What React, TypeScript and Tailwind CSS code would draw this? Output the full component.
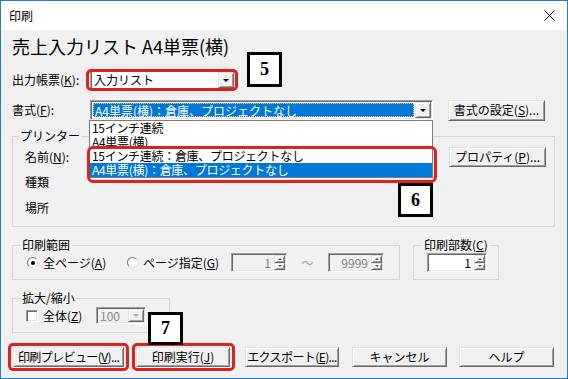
import React from "react";

const raised =
  "border border-t-[#e3e3e3] border-l-[#e3e3e3] border-r-[#696969] border-b-[#696969] shadow-[inset_1px_1px_0_#ffffff,inset_-1px_-1px_0_#a0a0a0]";
const sunken =
  "border border-t-[#a0a0a0] border-l-[#a0a0a0] border-r-white border-b-white shadow-[inset_1px_1px_0_#696969,inset_-1px_-1px_0_#e3e3e3]";

function DownArrow({ disabled }: { disabled?: boolean }) {
  return (
    <div className={"w-[16px] h-full flex items-center justify-center bg-[#f0f0f0] " + raised}>
      <div
        className={
          "w-0 h-0 border-l-[3px] border-r-[3px] border-t-[3px] border-l-transparent border-r-transparent " +
          (disabled ? "border-t-[#a0a0a0]" : "border-t-black")
        }
      />
    </div>
  );
}

function SpinButtons() {
  return (
    <div className="w-[11px] h-full flex flex-col">
      <div className={"flex-1 flex items-center justify-center bg-[#f0f0f0] " + raised}>
        <div className="w-0 h-0 border-l-[2px] border-r-[2px] border-b-[2px] border-l-transparent border-r-transparent border-b-[#606060]" />
      </div>
      <div className={"flex-1 flex items-center justify-center bg-[#f0f0f0] " + raised}>
        <div className="w-0 h-0 border-l-[2px] border-r-[2px] border-t-[2px] border-l-transparent border-r-transparent border-t-[#606060]" />
      </div>
    </div>
  );
}

function Spinner({ value, width, disabled }: { value: string; width: string; disabled?: boolean }) {
  return (
    <div className={"h-[19px] flex p-[1px] " + width + " " + sunken + (disabled ? " bg-[#f0f0f0]" : " bg-white")}>
      <div className={"flex-1 text-right pr-[3px] leading-[16px] " + (disabled ? "text-[#808080]" : "text-black")}>
        {value}
      </div>
      <SpinButtons />
    </div>
  );
}

function Button({ children, className }: { children: React.ReactNode; className: string }) {
  return (
    <div
      className={
        "h-[20px] flex items-center justify-center bg-[#f0f0f0] leading-[14px] whitespace-nowrap " +
        raised +
        " " +
        className
      }
    >
      {children}
    </div>
  );
}

function Group({
  label,
  className,
  legendClass,
  children,
}: {
  label: React.ReactNode;
  className: string;
  legendClass: string;
  children: React.ReactNode;
}) {
  return (
    <fieldset className={"border border-[#d5d5d5] " + className}>
      <legend className={"px-[1px] leading-[14px] " + legendClass}>{label}</legend>
      {children}
    </fieldset>
  );
}

export default function App() {
  return (
    <div className="w-[568px] h-[379px] relative overflow-hidden border border-[#1c7fd0] bg-[#f0f0f0] flex flex-col text-[12px] text-black whitespace-nowrap font-['Noto_Sans_CJK_JP',sans-serif]">
      <div className="h-[29px] bg-white flex items-center justify-between pl-[8px] pr-[12px]">
        <span className="leading-[14px]">印刷</span>
        <svg width="11" height="11" viewBox="0 0 11 11">
          <path d="M0.5 0.5 L10.5 10.5 M10.5 0.5 L0.5 10.5" stroke="#111" strokeWidth="1" />
        </svg>
      </div>

      <div className="flex flex-col pl-[11px]">
        <h1 className="mt-[6px] text-[18px] leading-[20px] font-normal">売上入力リスト A4単票(横)</h1>

        <div className="mt-[14px] h-[20px] flex items-center">
          <span className="w-[78px] leading-[14px]">
            出力帳票(<u>K</u>):
          </span>
          <div className={"w-[146px] h-[20px] flex p-[1px] bg-white " + sunken}>
            <div className="flex-1 pl-[2px] leading-[16px]">入力リスト</div>
            <DownArrow />
          </div>
        </div>

        <div className="mt-[10px] h-[20px] flex items-center">
          <span className="w-[78px] leading-[14px]">
            書式(<u>F</u>):
          </span>
          <div className="relative">
            <div className={"w-[343px] h-[20px] flex p-[1px] bg-white " + sunken}>
              <div className="flex-1 flex p-[1px]">
                <div className="flex-1 bg-[#0078d7] text-white pl-[1px] leading-[14px] border border-dotted border-[#e9c98a]">
                  A4単票(横)：倉庫、プロジェクトなし
                </div>
              </div>
              <DownArrow />
            </div>
            <div className="absolute left-[-1px] top-[20px] w-[344px] z-10 bg-white border border-[#7a7a7a] flex flex-col tracking-[-0.3px]">
              <div className="h-[14px] pl-[2px] leading-[14px] overflow-hidden">15インチ連続</div>
              <div className="h-[14px] pl-[2px] leading-[14px] overflow-hidden">A4単票(横)</div>
              <div className="h-[14px] pl-[2px] leading-[14px] overflow-hidden">15インチ連続：倉庫、プロジェクトなし</div>
              <div className="h-[14px] pl-[2px] leading-[14px] overflow-hidden bg-[#0078d7] text-white">
                A4単票(横)：倉庫、プロジェクトなし
              </div>
            </div>
          </div>
          <Button className="ml-[15px] w-[97px] h-[21px]">
            書式の設定(<u>S</u>)...
          </Button>
        </div>

        <Group label="プリンター" className="mt-[9px] w-[543px]" legendClass="ml-[6px]">
          <div className="flex flex-col pl-[12px] pb-[8px]">
            <div className="mt-[4px] h-[20px] flex items-center">
              <span className="leading-[14px]">
                名前(<u>N</u>):
              </span>
              <Button className="ml-auto mr-[8px] w-[97px]">
                プロパティ(<u>P</u>)...
              </Button>
            </div>
            <div className="mt-[5px] h-[20px] flex items-center leading-[14px]">種類</div>
            <div className="mt-[6px] h-[20px] flex items-center leading-[14px]">場所</div>
          </div>
        </Group>

        <div className="mt-[11px] flex items-start">
          <Group label="印刷範囲" className="w-[388px]" legendClass="ml-[8px]">
            <div className="mt-[1px] h-[19px] flex items-center pl-[14px] pb-0 mb-[7px]">
              <div className="w-[100px] flex items-center">
                <div className="w-[11px] h-[11px] rounded-full bg-white border border-t-[#7a7a7a] border-l-[#7a7a7a] border-r-[#e3e3e3] border-b-[#e3e3e3] flex items-center justify-center">
                  <div className="w-[4px] h-[4px] rounded-full bg-black" />
                </div>
                <span className="ml-[5px] leading-[14px]">
                  全ページ(<u>A</u>)
                </span>
              </div>
              <div className="w-[104px] flex items-center">
                <div className="w-[11px] h-[11px] rounded-full bg-white border border-t-[#7a7a7a] border-l-[#7a7a7a] border-r-[#e3e3e3] border-b-[#e3e3e3]" />
                <span className="ml-[5px] leading-[14px]">
                  ページ指定(<u>G</u>)
                </span>
              </div>
              <Spinner value="1" width="w-[56px]" disabled />
              <div className="w-[41px] text-center text-[#a0a0a0] leading-[14px]">～</div>
              <Spinner value="9999" width="w-[56px]" disabled />
            </div>
          </Group>

          <Group label={<>印刷部数(<u>C</u>)</>} className="ml-[13px] w-[86px]" legendClass="ml-[9px]">
            <div className="mt-[1px] mb-[7px] pl-[13px]">
              <Spinner value="1" width="w-[60px]" />
            </div>
          </Group>
        </div>

        <Group label="拡大/縮小" className="mt-[11px] w-[158px]" legendClass="ml-[8px]">
          <div className="mt-[2px] mb-[8px] h-[17px] flex items-center pl-[13px]">
            <div className={"w-[12px] h-[12px] bg-white " + sunken} />
            <span className="ml-[5px] w-[53px] leading-[14px]">
              全体(<u>Z</u>)
            </span>
            <div className={"w-[50px] h-[17px] flex p-[1px] bg-[#f0f0f0] " + sunken}>
              <div className="flex-1 pl-[2px] text-[#8a8a8a] leading-[13px]">100</div>
              <DownArrow disabled />
            </div>
          </div>
        </Group>

        <div className="mt-[14px] h-[20px] flex">
          <Button className="ml-[1px] w-[111px] tracking-[-0.6px]">
            印刷プレビュー(<u>V</u>)...
          </Button>
          <Button className="ml-[12px] w-[94px]">
            印刷実行(<u>J</u>)
          </Button>
          <Button className="ml-[15px] w-[94px] tracking-[-0.6px]">
            エクスポート(<u>E</u>)...
          </Button>
          <Button className="ml-[13px] w-[95px]">キャンセル</Button>
          <Button className="ml-[12px] w-[95px]">ヘルプ</Button>
        </div>
      </div>

      {/* red highlight frames */}
      <div className="absolute left-[85px] top-[68px] w-[152px] h-[22px] border-[3px] border-[#e0201d] rounded-[5px] z-20" />
      <div className="absolute left-[86px] top-[145px] w-[350px] h-[37px] border-[3px] border-[#e0201d] rounded-[6px] z-20" />
      <div className="absolute left-[7px] top-[342px] w-[121px] h-[28px] border-[3px] border-[#e0201d] rounded-[5px] z-20" />
      <div className="absolute left-[131px] top-[342px] w-[103px] h-[28px] border-[3px] border-[#e0201d] rounded-[5px] z-20" />

      {/* step number labels */}
      <div className="absolute left-[246px] top-[51px] w-[35px] h-[35px] border-[3px] border-black bg-white flex items-center justify-center font-['Liberation_Serif',serif] font-bold text-[18px] z-20">
        5
      </div>
      <div className="absolute left-[397px] top-[182px] w-[35px] h-[34px] border-[3px] border-black bg-white flex items-center justify-center font-['Liberation_Serif',serif] font-bold text-[18px] z-20">
        6
      </div>
      <div className="absolute left-[147px] top-[311px] w-[35px] h-[33px] border-[3px] border-black bg-white flex items-center justify-center font-['Liberation_Serif',serif] font-bold text-[18px] z-20">
        7
      </div>
    </div>
  );
}
